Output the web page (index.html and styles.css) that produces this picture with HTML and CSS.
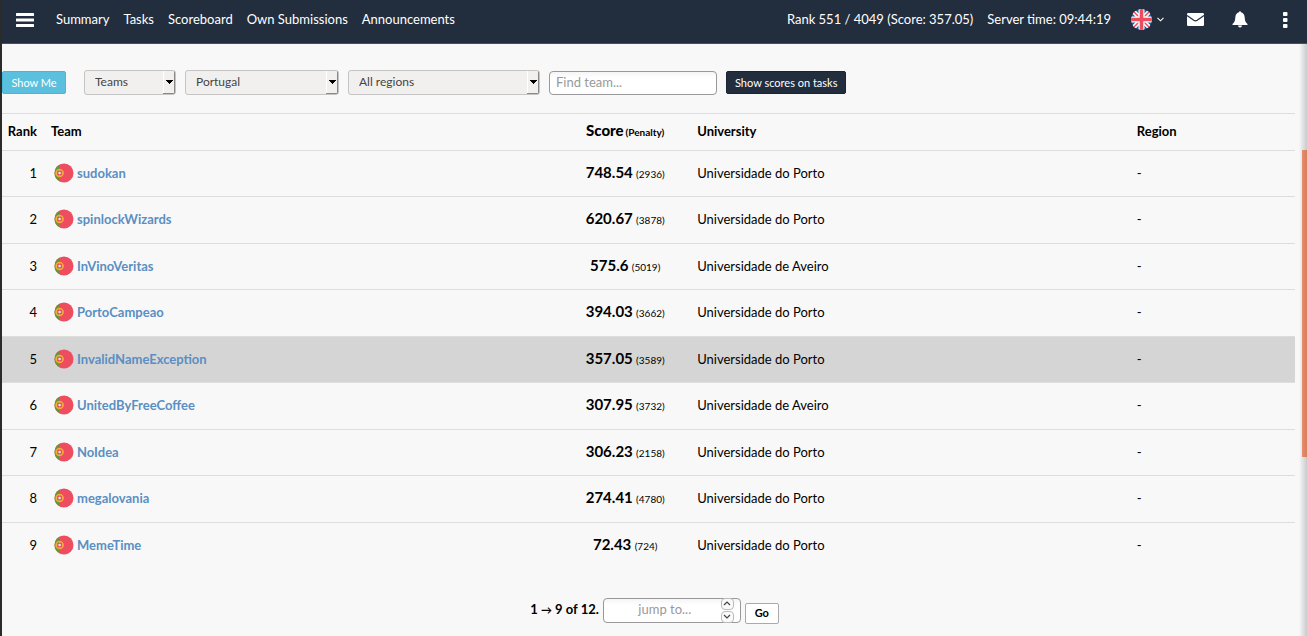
FILE: index.html
```html
<!DOCTYPE html>
<html lang="en">
<head>
<meta charset="utf-8">
<title>Scoreboard</title>
<meta name="viewport" content="width=device-width, initial-scale=1">
<link rel="stylesheet" href="styles.css">
</head>
<body>
<svg class="sprite" aria-hidden="true">
  <symbol id="pt" viewBox="0 0 20 20">
    <circle cx="10" cy="10" r="9.5" fill="#ee4d60"/>
    <path d="M6 1.4A9.5 9.5 0 0 0 6 18.6z" fill="#699635"/>
    <circle cx="5.6" cy="10" r="3.5" fill="none" stroke="#f2a93b" stroke-width="1.6"/>
    <path d="M2 10h7M5.600 6.400v7.200" stroke="#f5c33b" stroke-width="0.700"/>
    <circle cx="5.6" cy="10" r="2.200" fill="#ee4d60"/>
    <circle cx="5.6" cy="10" r="1.300" fill="#dfe8f5"/>
  </symbol>
</svg>
<div class="page">
  <header class="topbar">
    <button class="icon-button menu" aria-label="Menu"><svg width="18" height="14" viewBox="0 0 18 14" fill="#fff"><rect width="18" height="3" rx=".5"/><rect y="5.500" width="18" height="3" rx=".5"/><rect y="11" width="18" height="3" rx=".5"/></svg></button>
    <nav class="nav">
      <a href="#">Summary</a><a href="#">Tasks</a><a href="#">Scoreboard</a><a href="#">Own Submissions</a><a href="#">Announcements</a>
    </nav>
    <div class="status"><span>Rank 551 / 4049 (Score: 357.05)</span><span>Server time: 09:44:19</span></div>
    <div class="tools">
      <button class="icon-button language" aria-label="Language">
        <svg width="21" height="21" viewBox="0 0 21 21"><defs><clipPath id="round"><circle cx="10.500" cy="10.500" r="10.500"/></clipPath></defs><g clip-path="url(#round)"><path fill="#2a5f9e" d="M0 0h21v21H0z"/><path d="M0 0l21 21M21 0L0 21" stroke="#fff" stroke-width="4.500"/><path d="M0 0l21 21M21 0L0 21" stroke="#ed4c5c" stroke-width="1.500"/><path d="M10.500 0v21M0 10.500h21" stroke="#fff" stroke-width="6"/><path d="M10.500 0v21M0 10.500h21" stroke="#ed4c5c" stroke-width="3.600"/></g></svg>
        <svg width="7" height="5" viewBox="0 0 7 5"><path d="M.5.8l3 3 3-3" fill="none" stroke="#fff" stroke-width="1.100"/></svg>
      </button>
      <button class="icon-button mail" aria-label="Messages"><svg width="17" height="13" viewBox="0 0 17 13"><rect width="17" height="13" rx="1.200" fill="#fff"/><path d="M0 2.500l6.800 4.800q1.700 1 3.400 0L17 2.500" fill="none" stroke="#222d3d" stroke-width="1.200"/></svg></button>
      <button class="icon-button bell" aria-label="Notifications"><svg width="16" height="17" viewBox="0 0 16 17" fill="#fff"><path d="M7 1.300a1 1 0 0 1 2 0C11.600 2 12.600 4 12.700 6.500c.1 3 .8 5 2.800 6.500v1H.5v-1c2-1.500 2.700-3.500 2.800-6.500C3.400 4 4.400 2 7 1.300z"/><path d="M6 14.500h4a2 2 0 0 1-4 0z"/></svg></button>
      <button class="icon-button more" aria-label="More"><svg width="5" height="16" viewBox="0 0 5 16" fill="#fff"><rect width="4.500" height="4" rx="1"/><rect y="6" width="4.500" height="4" rx="1"/><rect y="12" width="4.500" height="4" rx="1"/></svg></button>
    </div>
  </header>
  <main>
    <form class="filters">
      <button type="button" class="button show-me">Show Me</button>
      <select class="kind" aria-label="Kind"><option>Teams</option></select>
      <select class="country" aria-label="Country"><option>Portugal</option></select>
      <select class="region" aria-label="Region"><option>All regions</option></select>
      <input class="field find" type="text" placeholder="Find team..." aria-label="Find team">
      <button type="button" class="button scores">Show scores on tasks</button>
    </form>
    <table class="board">
      <colgroup><col class="col-rank"><col class="col-team"><col class="col-score"><col class="col-university"><col></colgroup>
      <thead><tr><th class="rank">Rank</th><th>Team</th><th class="score"><b>Score</b><small>(Penalty)</small></th><th>University</th><th>Region</th></tr></thead>
      <tbody>
        <tr><td class="rank">1</td><td><a class="team" href="#"><svg><use href="#pt"/></svg>sudokan</a></td><td class="score"><b>748.54</b> <small>(2936)</small></td><td>Universidade do Porto</td><td>-</td></tr>
        <tr><td class="rank">2</td><td><a class="team" href="#"><svg><use href="#pt"/></svg>spinlockWizards</a></td><td class="score"><b>620.67</b> <small>(3878)</small></td><td>Universidade do Porto</td><td>-</td></tr>
        <tr><td class="rank">3</td><td><a class="team" href="#"><svg><use href="#pt"/></svg>InVinoVeritas</a></td><td class="score"><b>575.6</b> <small>(5019)</small></td><td>Universidade de Aveiro</td><td>-</td></tr>
        <tr><td class="rank">4</td><td><a class="team" href="#"><svg><use href="#pt"/></svg>PortoCampeao</a></td><td class="score"><b>394.03</b> <small>(3662)</small></td><td>Universidade do Porto</td><td>-</td></tr>
        <tr class="own"><td class="rank">5</td><td><a class="team" href="#"><svg><use href="#pt"/></svg>InvalidNameException</a></td><td class="score"><b>357.05</b> <small>(3589)</small></td><td>Universidade do Porto</td><td>-</td></tr>
        <tr><td class="rank">6</td><td><a class="team" href="#"><svg><use href="#pt"/></svg>UnitedByFreeCoffee</a></td><td class="score"><b>307.95</b> <small>(3732)</small></td><td>Universidade de Aveiro</td><td>-</td></tr>
        <tr><td class="rank">7</td><td><a class="team" href="#"><svg><use href="#pt"/></svg>NoIdea</a></td><td class="score"><b>306.23</b> <small>(2158)</small></td><td>Universidade do Porto</td><td>-</td></tr>
        <tr><td class="rank">8</td><td><a class="team" href="#"><svg><use href="#pt"/></svg>megalovania</a></td><td class="score"><b>274.41</b> <small>(4780)</small></td><td>Universidade do Porto</td><td>-</td></tr>
        <tr><td class="rank">9</td><td><a class="team" href="#"><svg><use href="#pt"/></svg>MemeTime</a></td><td class="score"><b>72.43</b> <small>(724)</small></td><td>Universidade do Porto</td><td>-</td></tr>
      </tbody>
    </table>
    <form class="pager">
      <label for="jump">1 <span class="arrow">→</span> 9 of 12.</label>
      <div class="jump">
        <input id="jump" class="field" type="text" inputmode="numeric" placeholder="jump to...">
        <div class="steps">
          <button type="button" aria-label="Increase"><svg width="8" height="5" viewBox="0 0 8 5"><path d="M1 4l3-3 3 3"/></svg></button>
          <button type="button" aria-label="Decrease"><svg width="8" height="5" viewBox="0 0 8 5"><path d="M1 1l3 3 3-3"/></svg></button>
        </div>
      </div>
      <button type="button" class="button go">Go</button>
    </form>
  </main>
  <div class="edge"><div class="edge-tab"></div></div>
</div>
</body>
</html>
```
FILE: styles.css
```css
* { box-sizing: border-box; }
body {
  margin: 0;
  background: #f8f8f8;
  color: #000;
  font: 13px/18px Lato, "Liberation Sans", sans-serif;
}
button, input, select { font: inherit; margin: 0; }
a { text-decoration: none; }
svg { display: block; flex: none; }
.sprite { position: absolute; width: 0; height: 0; }
.page {
  position: relative;
  min-height: 100vh;
  border-left: 2px solid #2b2b29;
}

.topbar {
  display: flex;
  align-items: center;
  height: 44px;
  padding: 0 19px 4px 14px;
  background: #222d3d;
  border-bottom: 1px solid #4a4f5c;
  color: #fff;
}
.icon-button {
  display: flex;
  align-items: center;
  padding: 0;
  border: 0;
  background: none;
}
.nav { display: flex; gap: 14px; margin-left: 22px; padding-bottom: 2px; }
.nav a { color: #fff; }
.status { display: flex; gap: 14px; margin-left: auto; padding-bottom: 2px; }
.tools { display: flex; align-items: center; margin-left: 20px; }
.language { gap: 5px; }
.mail { margin-left: 23px; }
.bell { margin-left: 28px; }
.more { margin-left: 35px; }

.filters {
  display: flex;
  align-items: center;
  gap: 9px;
  padding: 26px 12px 18px 0;
}
.button {
  height: 23px;
  border-radius: 2px;
  font-size: 11px;
  line-height: 16px;
  white-space: nowrap;
}
.show-me {
  width: 64px;
  margin-right: 9px;
  padding: 0;
  border: 1px solid #46b8da;
  background: #5bc0de;
  color: #fff;
}
.scores { padding: 0 8px; border: 1px solid #1a2433; background: #222d3d; color: #fff; }
select {
  appearance: none;
  height: 25px;
  padding: 0 24px 2px 10px;
  border: 1px solid #c4c4c4;
  border-radius: 3px;
  background:
    linear-gradient(#000, #000) right 3px top 10px / 5px 1px no-repeat,
    linear-gradient(#000, #000) right 2px top 9px / 7px 1px no-repeat,
    linear-gradient(#000, #000) right 4px top 11px / 3px 1px no-repeat,
    linear-gradient(#000, #000) right 5px top 12px / 1px 1px no-repeat,
    linear-gradient(#888, #888) right 0 top 0 / 1px 100% no-repeat,
    linear-gradient(#888, #888) right 0 bottom 0 / 12px 1px no-repeat,
    linear-gradient(#fff, #fff) right 11px top 0 / 1px 100% no-repeat,
    #f1f0ee;
  color: #444;
  font-size: 12px;
}
.kind { width: 92px; }
.country { width: 154px; }
.region { width: 192px; }
.field {
  height: 24px;
  padding: 0 6px 2px;
  border: 1px solid #999;
  border-radius: 4px;
  background: linear-gradient(#f5f5f5, #fff 6px);
}
.field::placeholder { color: #999; opacity: 1; }
.find { width: 168px; }

.board {
  width: calc(100% - 12px);
  table-layout: fixed;
  border-collapse: collapse;
}
.col-rank { width: 42px; }
.col-team { width: 40%; }
.col-score { width: 128px; }
.col-university { width: 34%; }
th, td {
  padding: 0 8px 2px;
  border-top: 1px solid #ddd;
  text-align: left;
  vertical-align: middle;
}
th { height: 37px; padding-bottom: 3px; white-space: nowrap; }
td { height: 47px; }
tr:nth-child(odd) td { height: 46px; }
th:nth-child(2), td:nth-child(2) { padding-left: 7px; }
th.rank, td.rank { padding-left: 0; padding-right: 7px; text-align: right; }
th.score, td.score { text-align: center; white-space: nowrap; }
.score b { font-size: 15px; }
.score small { font-size: 10px; }
th.score small { margin-left: 2px; }
.own td { background: #d5d5d5; }
.team {
  display: flex;
  align-items: center;
  gap: 3px;
  padding-left: 3px;
  color: #5a8fc3;
  font-weight: 700;
}
.team svg { width: 20px; height: 20px; }

.pager {
  display: flex;
  align-items: center;
  justify-content: center;
  gap: 4px;
  padding: 28px 0 12px;
}
.pager label { padding-bottom: 2px; font-weight: 700; }
.arrow { font-size: 11px; }
.jump { position: relative; display: flex; }
.jump .field { width: 138px; height: 25px; padding: 0 28px 2px 14px; text-align: center; }
.steps { position: absolute; top: 0; right: 7px; display: flex; flex-direction: column; gap: 1px; }
.steps button {
  display: flex;
  align-items: center;
  justify-content: center;
  width: 13px;
  height: 12px;
  padding: 0;
  border: 1px solid #bbb;
  border-radius: 4px;
  background: #fafafa;
}
.steps path { fill: none; stroke: #444; stroke-width: 1.2; }
.go {
  width: 34px;
  height: 21px;
  margin-top: 6px;
  padding: 0;
  border: 1px solid #aaa;
  background: #fff;
  color: #000;
  font-weight: 700;
}

.edge {
  position: absolute;
  top: 44px;
  right: 0;
  bottom: 0;
  width: 8px;
  background: linear-gradient(to right, #f8f8f8, #c8cacd);
}
.edge-tab {
  width: 5px;
  height: 307px;
  margin: 106px 0 0 3px;
  background: linear-gradient(to right, #e88d6b, #d57d5d);
}
```
